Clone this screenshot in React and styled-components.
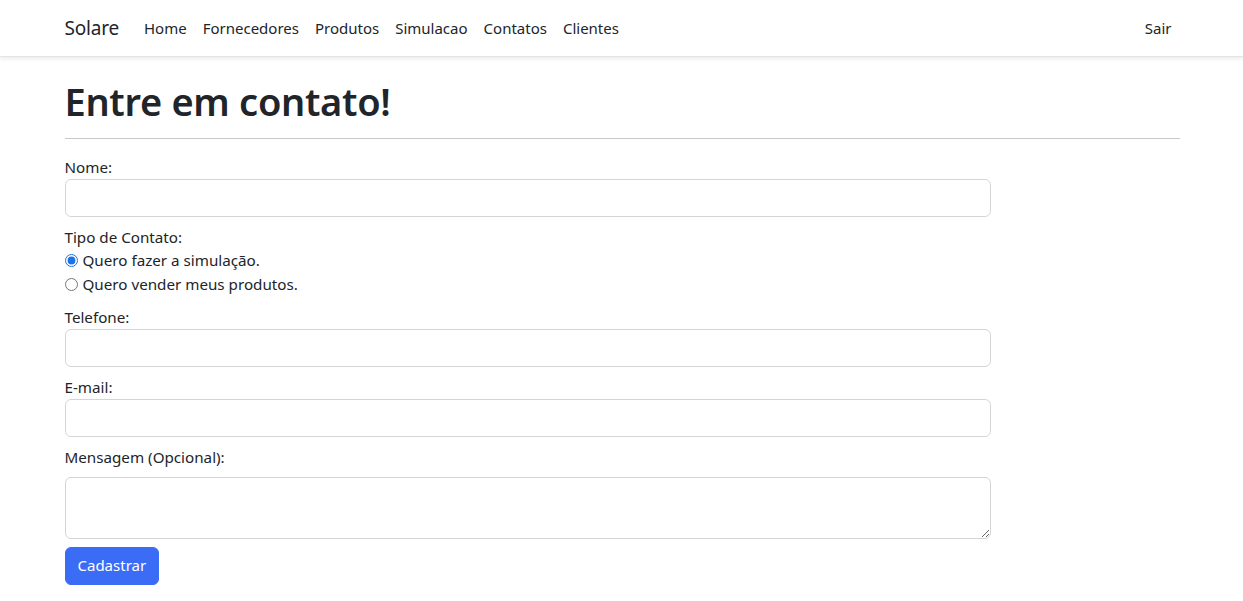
import React, { useState } from 'react'
import styled, { createGlobalStyle } from 'styled-components'

const GlobalStyle = createGlobalStyle`
  *, *::before, *::after { box-sizing: border-box; }
  body {
    margin: 0;
    font-family: "Noto Sans", "Open Sans", sans-serif;
    font-size: 16px;
    line-height: 1.5;
    color: #212529;
    background: #fff;
  }
`

const Navbar = styled.nav`
  height: 57px;
  background: #fff;
  box-shadow: 0 2px 4px rgba(0, 0, 0, 0.08);
  border-bottom: 1px solid #e4e4e4;
`

const NavInner = styled.div`
  width: 1140px;
  margin: 0 auto;
  padding: 0 12px 0 13px;
  height: 100%;
  display: flex;
  align-items: center;
`

const Brand = styled.a`
  font-size: 19px;
  color: #212529;
  margin-right: 17px;
  padding: 5px 0;
  text-decoration: none;
  letter-spacing: -0.2px;
`

const NavList = styled.ul`
  display: flex;
  list-style: none;
  margin: 0;
  padding: 0;
  flex: 1;
`

const NavLink = styled.a`
  display: block;
  padding: 8px;
  font-size: 15px;
  color: #212529;
  text-decoration: none;
  cursor: pointer;
`

const Container = styled.main`
  width: 1140px;
  margin: 0 auto;
  padding: 22px 12px 0 13px;
`

const Title = styled.h1`
  font-size: 38px;
  font-weight: 600;
  line-height: 1.2;
  margin: 0;
  letter-spacing: -0.3px;
`

const Divider = styled.hr`
  margin: 13px 0 16px;
  border: 0;
  border-top: 1px solid #c8c8c8;
`

const Form = styled.form`
  width: 926px;
  display: flex;
  flex-direction: column;
`

const Field = styled.div`
  display: flex;
  flex-direction: column;
  margin-bottom: 8px;
`

const Label = styled.label`
  font-size: 15.2px;
  line-height: 24px;
  margin-bottom: ${p => (p.$gap ? '8px' : '0')};
`

const Input = styled.input`
  height: 38px;
  padding: 6px 12px;
  font: inherit;
  border: 1px solid #d3d6d9;
  border-radius: 6px;
  outline: none;
`

const TextArea = styled.textarea`
  height: 62px;
  padding: 6px 12px;
  font: inherit;
  border: 1px solid #d3d6d9;
  border-radius: 6px;
  resize: vertical;
  outline: none;
`

const RadioRow = styled.label`
  display: flex;
  align-items: center;
  height: 24px;
  font-size: 15.2px;
  input {
    margin: 0 5px 0 0;
    width: 13px;
    height: 13px;
    accent-color: #1a73e8;
  }
`

const Button = styled.button`
  align-self: flex-start;
  height: 38px;
  padding: 0 12px;
  font: inherit;
  font-size: 15px;
  color: #fff;
  background: #3b6cf6;
  border: 1px solid #3b6cf6;
  border-radius: 6px;
  cursor: pointer;
`

const links = ['Home', 'Fornecedores', 'Produtos', 'Simulacao', 'Contatos', 'Clientes']

export default function App() {
  const [tipo, setTipo] = useState('simulacao')

  return (
    <>
      <GlobalStyle />
      <Navbar>
        <NavInner>
          <Brand href="#">Solare</Brand>
          <NavList>
            {links.map(l => (
              <li key={l}><NavLink>{l}</NavLink></li>
            ))}
          </NavList>
          <NavLink>Sair</NavLink>
        </NavInner>
      </Navbar>
      <Container>
        <Title>Entre em contato!</Title>
        <Divider />
        <Form onSubmit={e => e.preventDefault()}>
          <Field>
            <Label>Nome:</Label>
            <Input type="text" />
          </Field>
          <Field>
            <Label>Tipo de Contato:</Label>
            <RadioRow>
              <input type="radio" name="tipo" checked={tipo === 'simulacao'} onChange={() => setTipo('simulacao')} />
              Quero fazer a simulação.
            </RadioRow>
            <RadioRow>
              <input type="radio" name="tipo" checked={tipo === 'vender'} onChange={() => setTipo('vender')} />
              Quero vender meus produtos.
            </RadioRow>
          </Field>
          <Field>
            <Label>Telefone:</Label>
            <Input type="tel" />
          </Field>
          <Field>
            <Label>E-mail:</Label>
            <Input type="email" />
          </Field>
          <Field>
            <Label $gap>Mensagem (Opcional):</Label>
            <TextArea rows={2} />
          </Field>
          <Button type="submit">Cadastrar</Button>
        </Form>
      </Container>
    </>
  )
}
